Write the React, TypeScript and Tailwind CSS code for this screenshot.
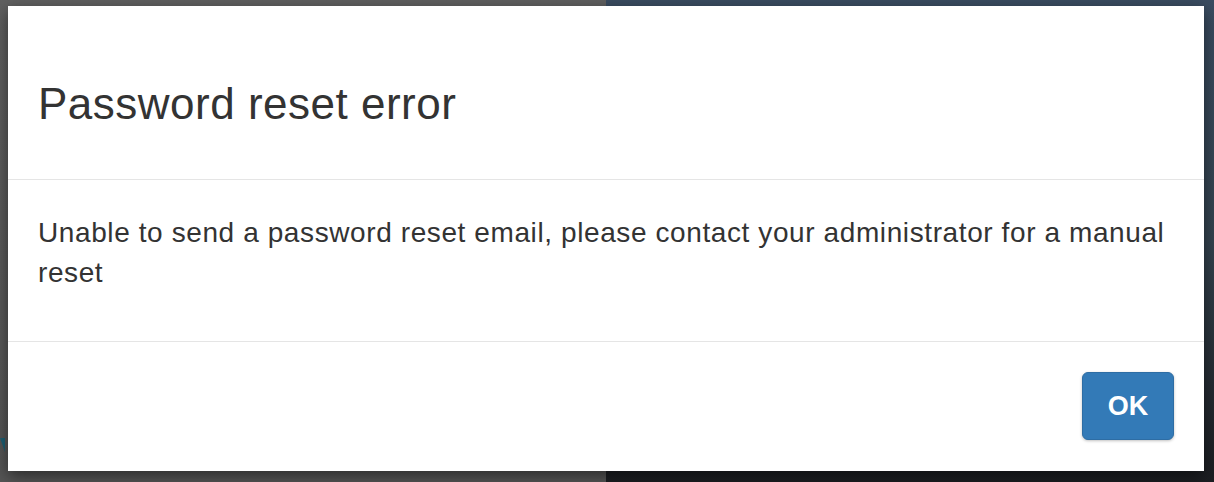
import React from "react";

export default function App() {
  return (
    <div className="relative w-[1214px] h-[482px] overflow-hidden flex" style={{ fontFamily: '"Liberation Sans", Arial, sans-serif' }}>
      <div className="w-[606px] h-full bg-gradient-to-b from-[#606060] to-[#555555]" />
      <div className="flex-1 h-full bg-gradient-to-b from-[#3a4c61] via-[#34434f] to-[#1c1e22]" />
      <div className="absolute left-0 top-[438px] w-0 h-0 border-l-[5px] border-l-transparent border-t-[14px] border-t-[#1d5f73]" />
      <div className="absolute left-[8px] top-[6px] w-[1196px] h-[465px] bg-white shadow-[0_5px_15px_rgba(0,0,0,0.5)] flex flex-col text-[#333333]">
        <div className="h-[174px] border-b border-[#e5e5e5] px-[30px] flex items-center">
          <h4 className="text-[44px] leading-[48px] tracking-[0.5px] mt-[22px]">Password reset error</h4>
        </div>
        <div className="h-[162px] border-b border-[#e5e5e5] px-[30px] pt-[33px]">
          <p className="text-[28px] leading-[40px] tracking-[0.6px]">
            Unable to send a password reset email, please contact your administrator for a manual reset
          </p>
        </div>
        <div className="flex-1 flex justify-end items-start pt-[30px] pr-[30px]">
          <button className="w-[92px] h-[68px] rounded-[6px] bg-[#337ab7] border border-[#2e6da4] text-white font-bold text-[27px] shadow-[0_1px_3px_rgba(0,0,0,0.25)]">
            OK
          </button>
        </div>
      </div>
    </div>
  );
}
